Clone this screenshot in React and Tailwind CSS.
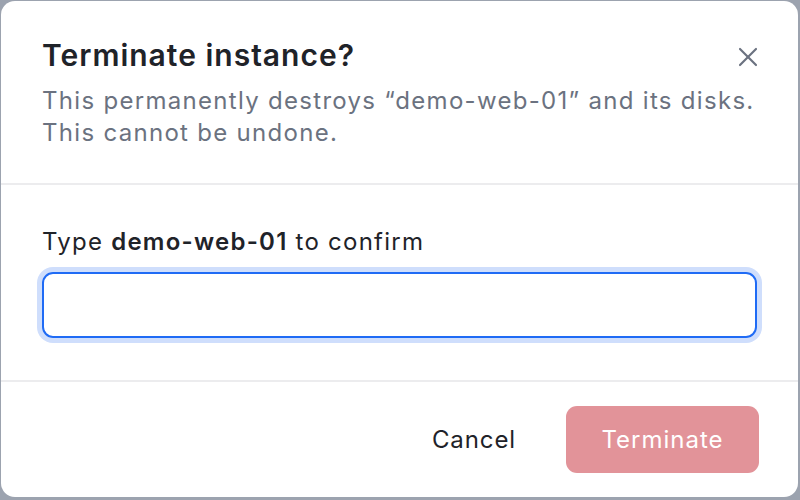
import { X } from 'lucide-react';

export default function App() {
  return (
    <div className="w-[800px] h-[500px] bg-[#9ca3af] pt-px pl-px pr-[2px] pb-[3px]" style={{ fontFamily: 'Inter, "Noto Sans", sans-serif' }}>
      <div className="h-full w-full bg-white rounded-[14px] flex flex-col overflow-hidden">
        {/* Header */}
        <div className="relative px-[41px] pt-[36px] pb-[34px] border-b-2 border-[#ececee]">
          <h2 className="text-[30px] leading-[36px] font-semibold text-[#1f2329] tracking-[1px]">Terminate instance?</h2>
          <p className="mt-[12px] text-[24px] leading-[32px] text-[#6b7280] tracking-[1.3px]">
            This permanently destroys “demo-web-01” and its disks.
            <br />
            This cannot be undone.
          </p>
          <button className="absolute right-[34px] top-[40px] text-[#6b7280]">
            <X className="w-[32px] h-[32px]" strokeWidth={1.6} />
          </button>
        </div>

        {/* Body */}
        <div className="px-[41px] pt-[41px] pb-[42px] border-b-2 border-[#ececee]">
          <label className="block text-[24px] leading-[32px] text-[#1f2329] tracking-[1.25px]">
            Type <span className="font-semibold">demo-web-01</span> to confirm
          </label>
          <input
            type="text"
            className="mt-[14px] block w-full h-[66px] rounded-[11px] border-2 border-[#1f6bf5] ring-[5px] ring-[#cfdefc] outline-none px-4 text-[24px]"
          />
        </div>

        {/* Footer */}
        <div className="flex-1 flex items-center justify-end gap-[50px] pr-[39px]">
          <button className="text-[24px] text-[#1f2329] tracking-[0.9px]">Cancel</button>
          <button className="w-[193px] h-[67px] rounded-[11px] bg-[#e29399] text-white text-[24px] tracking-[1px]">Terminate</button>
        </div>
      </div>
    </div>
  );
}
